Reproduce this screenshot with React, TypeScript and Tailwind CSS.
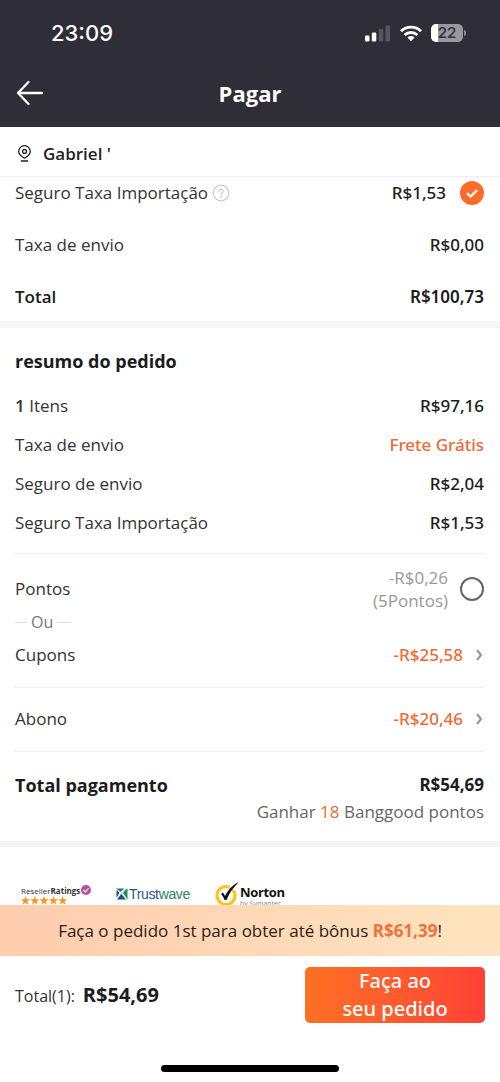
import type { ReactNode } from 'react'

function StatusBar() {
  return (
    <div className="flex items-center justify-between pt-4 pl-[51px] pr-[34px]">
      <span className="font-['Inter','Liberation_Sans',sans-serif] text-[22px] leading-[34px] font-medium">
        23:09
      </span>
      <div className="flex items-center gap-[9px]">
        <svg width="26" height="17" viewBox="0 0 26 17" aria-hidden="true">
          <rect x="0" y="10.5" width="4.5" height="6" rx="1.3" fill="#fff" />
          <rect x="6.8" y="7.5" width="4.5" height="9" rx="1.3" fill="#fff" />
          <rect x="13.8" y="4" width="4.5" height="12.5" rx="1.3" fill="#57565f" />
          <rect x="20.5" y="0.5" width="4.5" height="16" rx="1.3" fill="#57565f" />
        </svg>
        <svg width="22" height="17" viewBox="0 0 22 17" aria-hidden="true">
          <g fill="none" stroke="#fff" strokeWidth="2.9">
            <path d="M1 6.2a14.4 14.4 0 0 1 20 0" />
            <path d="M4.7 10a9 9 0 0 1 12.6 0" />
          </g>
          <path d="M11 16.2l3.6-3.6a5.1 5.1 0 0 0-7.2 0z" fill="#fff" />
        </svg>
        <div className="flex items-center">
          <div className="flex h-[18px] w-8 items-center justify-center rounded-[5px] bg-linear-to-r from-white from-22% to-[#99989e] to-22%">
            <span className="font-['Inter','Liberation_Sans',sans-serif] text-[15px] leading-[18px] font-semibold text-[#35343f]">
              22
            </span>
          </div>
          <span className="ml-px h-[6px] w-[2px] rounded-r-full bg-[#8b8a91]" />
        </div>
      </div>
    </div>
  )
}

function Header() {
  return (
    <header className="h-[127px] bg-[#2e2d38] text-white">
      <StatusBar />
      <div className="grid grid-cols-[1fr_auto_1fr] items-center px-4 pt-[25px]">
        <button type="button" aria-label="Voltar" className="w-7">
          <svg width="28" height="26" viewBox="0 0 28 26" fill="none" stroke="currentColor" strokeWidth="2.3" strokeLinecap="round" strokeLinejoin="round">
            <path d="M12.5 2L2 13l10.5 11M2 13h24" />
          </svg>
        </button>
        <h1 className="text-[22px] leading-9 font-bold">Pagar</h1>
      </div>
    </header>
  )
}

function Address() {
  return (
    <div className="flex h-[50px] items-center border-b border-[#eee] px-4 pt-1">
      <svg width="17" height="17" viewBox="0 0 17 17" fill="none" stroke="#222" strokeWidth="1.3" strokeLinecap="round" aria-hidden="true">
        <path d="M8.5 13.2C5.2 11.4 2.7 9.3 2.7 6.5a5.8 5.8 0 0 1 11.6 0c0 2.8-2.5 4.9-5.8 6.700z" />
        <circle cx="8.5" cy="6.4" r="1.9" />
        <path d="M5.3 16h6.4" />
      </svg>
      <span className="ml-[10px] font-semibold text-[#222]">Gabriel '</span>
    </div>
  )
}

function Row({ label, children, className = '' }: { label: ReactNode; children: ReactNode; className?: string }) {
  return (
    <div className={`flex items-center justify-between ${className}`}>
      <span className="flex items-center">{label}</span>
      <span className="flex items-center font-['Noto_Sans','Open_Sans',sans-serif] font-medium text-[#1c1c1c]">
        {children}
      </span>
    </div>
  )
}

function Chevron() {
  return (
    <svg className="ml-3" width="9" height="12" viewBox="0 0 9 12" fill="none" stroke="#999" strokeWidth="2.2" aria-hidden="true">
      <path d="M2 1l4 5-4 5" />
    </svg>
  )
}

function InsuranceRow() {
  return (
    <div className="flex h-8 items-center">
      <label htmlFor="insurance">Seguro Taxa Importação</label>
      <button type="button" aria-label="Ajuda" className="ml-1">
        <svg width="18" height="18" viewBox="0 0 18 18" fill="none" stroke="#ccc" strokeWidth="1.3" strokeLinecap="round">
          <circle cx="9" cy="9" r="7.8" />
          <path d="M6.9 7.3a2.1 2.1 0 1 1 3.3 1.7c-.8.5-1.2.8-1.2 1.6" />
          <circle cx="9" cy="12.8" r=".4" />
        </svg>
      </button>
      <span className="mr-[14px] ml-auto font-['Noto_Sans','Open_Sans',sans-serif] font-medium text-[#1c1c1c]">
        R$1,53
      </span>
      <span className="grid size-6 place-items-center">
        <input
          id="insurance"
          type="checkbox"
          defaultChecked
          className="peer col-start-1 row-start-1 size-6 appearance-none rounded-full border-2 border-[#666] checked:border-0 checked:bg-[#fc6b28]"
        />
        <svg className="pointer-events-none col-start-1 row-start-1 hidden peer-checked:block" width="12" height="9" viewBox="0 0 12 9" fill="none" stroke="#fff" strokeWidth="2.4" aria-hidden="true">
          <path d="M1 4l3.5 3.500L11 1.200" />
        </svg>
      </span>
    </div>
  )
}

function TrustLogos() {
  return (
    <div className="flex h-[58px] items-start overflow-hidden pt-[38px] pl-[21px] leading-none">
      <div className="w-[95px]">
        <div className="flex items-start">
          <span className="pt-px font-['Open_Sans',sans-serif] text-[8px] leading-[10px] text-[#333]">
            Reseller<b>Ratings</b>
          </span>
          <svg className="ml-px" width="10" height="10" viewBox="0 0 10 10" aria-hidden="true">
            <circle cx="5" cy="5" r="5" fill="#bd4bab" />
            <path d="M2.5 5l2 2L7.7 3" fill="none" stroke="#fff" strokeWidth="1.2" />
          </svg>
        </div>
        <svg width="46" height="9" viewBox="0 0 46 9" fill="#f9971f" aria-hidden="true">
          {[0, 9.3, 18.6, 27.9, 37.2].map((x) => (
            <path key={x} transform={`translate(${x} 0)`} d="M4.5 0l1.2 3.2 3.3.1-2.6 2.1.9 3.3-2.8-1.9-2.8 1.9.9-3.3L0 3.3l3.3-.1z" />
          ))}
        </svg>
      </div>
      <div className="flex w-[99px] items-center pt-px">
        <svg width="12" height="12" viewBox="0 0 12 12" aria-hidden="true">
          <path d="M0 .5h8.5L4.5 4z" fill="#1c7f86" />
          <path d="M9.5 1.5L11.5.5v11L7 5z" fill="#1c8a5e" />
          <path d="M.5 2l3 2.8-3 5z" fill="#174f8c" />
          <path d="M1 11.5L8.5 1.5 5.5 6l4.5 5.5z" fill="#174f8c" />
        </svg>
        <span className="ml-px font-['Liberation_Sans',sans-serif] text-[14px] leading-4 tracking-tight text-[#24588a]">
          Trust<span className="text-[#2c8064]">wave</span>
        </span>
      </div>
      <div className="flex">
        <svg width="25" height="26" viewBox="0 0 25 26" fill="none" className="-mt-[3px]" aria-hidden="true">
          <circle cx="11" cy="13.5" r="9" stroke="#fbc421" strokeWidth="3.2" />
          <path d="M14 5l8-4.5L23.5 5l-3 4z" fill="#fff" />
          <path d="M6 12l2-1.5 2 3.5C13 8 17.5 3 23.5.3 18.5 5.5 14.5 10.5 11.5 18H9.5C8.8 15.5 7.5 13.5 6 12z" fill="#111" />
        </svg>
        <div className="font-['Open_Sans',sans-serif]">
          <div className="pt-px text-[13px] leading-[13px] font-bold tracking-tight text-[#111]">Norton</div>
          <div className="text-[7px] leading-[9px] text-[#888]">by Symantec</div>
        </div>
      </div>
    </div>
  )
}

function Footer() {
  return (
    <footer>
      <p className="bg-linear-to-r from-[#ffccae] to-[#ffe4bf] text-center leading-[51px] text-[#2b1d14]">
        Faça o pedido 1st para obter até bônus <b className="text-[#f2703a]">R$61,39</b>!
      </p>
      <div className="flex items-center justify-between px-[15px] pt-[11px]">
        <p className="flex items-baseline gap-2 text-base">
          Total(1): <b className="text-xl text-[#1c1c1c]">R$54,69</b>
        </p>
        <button
          type="button"
          className="h-14 w-[180px] rounded-[5px] bg-linear-to-r from-[#ff7023] to-[#ff4136] px-9 font-['Noto_Sans','Open_Sans',sans-serif] text-xl leading-7 font-medium text-white"
        >
          Faça ao seu pedido
        </button>
      </div>
      <div className="mx-auto mt-[42px] h-[7px] w-[178px] rounded-full bg-black" />
    </footer>
  )
}

export default function App() {
  return (
    <div className="bg-white pb-[10px] font-['Open_Sans','Noto_Sans',sans-serif] text-[17px] leading-6 text-[#333]">
      <Header />
      <Address />
      <main>
        <section className="h-[144px] pr-4 pl-[15px]">
          <InsuranceRow />
          <Row label="Taxa de envio" className="mt-6">R$0,00</Row>
          <Row label={<b className="font-semibold text-[#1c1c1c]">Total</b>} className="mt-[28px]">
            <b className="font-semibold">R$100,73</b>
          </Row>
        </section>
        <div className="h-[7px] bg-[#f6f6f8]" />
        <section className="pt-[21px] pr-4 pl-[15px]">
          <h2 className="text-lg leading-6 font-bold text-[#1c1c1c]">resumo do pedido</h2>
          <div className="mt-[21px] grid gap-[15px] border-b border-[#eee] pb-[18px]">
            <Row label={<span><b className="font-semibold">1</b> Itens</span>}>R$97,16</Row>
            <Row label="Taxa de envio">
              <span className="text-[#ee6a37]">Frete Grátis</span>
            </Row>
            <Row label="Seguro de envio">R$2,04</Row>
            <Row label="Seguro Taxa Importação">R$1,53</Row>
          </div>
          <div className="border-b border-[#eee] pb-5">
            <div className="flex items-center pt-3">
              <label htmlFor="points">Pontos</label>
              <span className="mr-3 ml-auto text-right leading-[23px] text-[#999]">
                -R$0,26
                <br />
                (5Pontos)
              </span>
              <input id="points" type="checkbox" className="size-6 appearance-none rounded-full border-2 border-[#666] checked:bg-[#fc6b28]" />
            </div>
            <div className="flex h-5 items-center gap-1 text-base leading-5 text-[#777]">
              <span className="h-px w-3 bg-[#ddd]" />
              Ou
              <span className="h-px w-[14px] bg-[#ddd]" />
            </div>
            <Row label="Cupons" className="mt-[11px]">
              <span className="text-[#ee6a37]">-R$25,58</span>
              <Chevron />
            </Row>
          </div>
          <Row label="Abono" className="border-b border-[#eee] pt-[19px] pb-5">
            <span className="text-[#ee6a37]">-R$20,46</span>
            <Chevron />
          </Row>
          <div className="pt-[21px] pb-[17px]">
            <Row label={<b className="text-lg leading-6 text-[#1c1c1c]">Total pagamento</b>}>
              <b>R$54,69</b>
            </Row>
            <p className="mt-[3px] text-right text-[#666]">
              Ganhar <span className="text-[#ee6a37]">18</span> Banggood pontos
            </p>
          </div>
        </section>
        <div className="h-[6px] bg-[#f5f5f5]" />
        <TrustLogos />
      </main>
      <Footer />
    </div>
  )
}
